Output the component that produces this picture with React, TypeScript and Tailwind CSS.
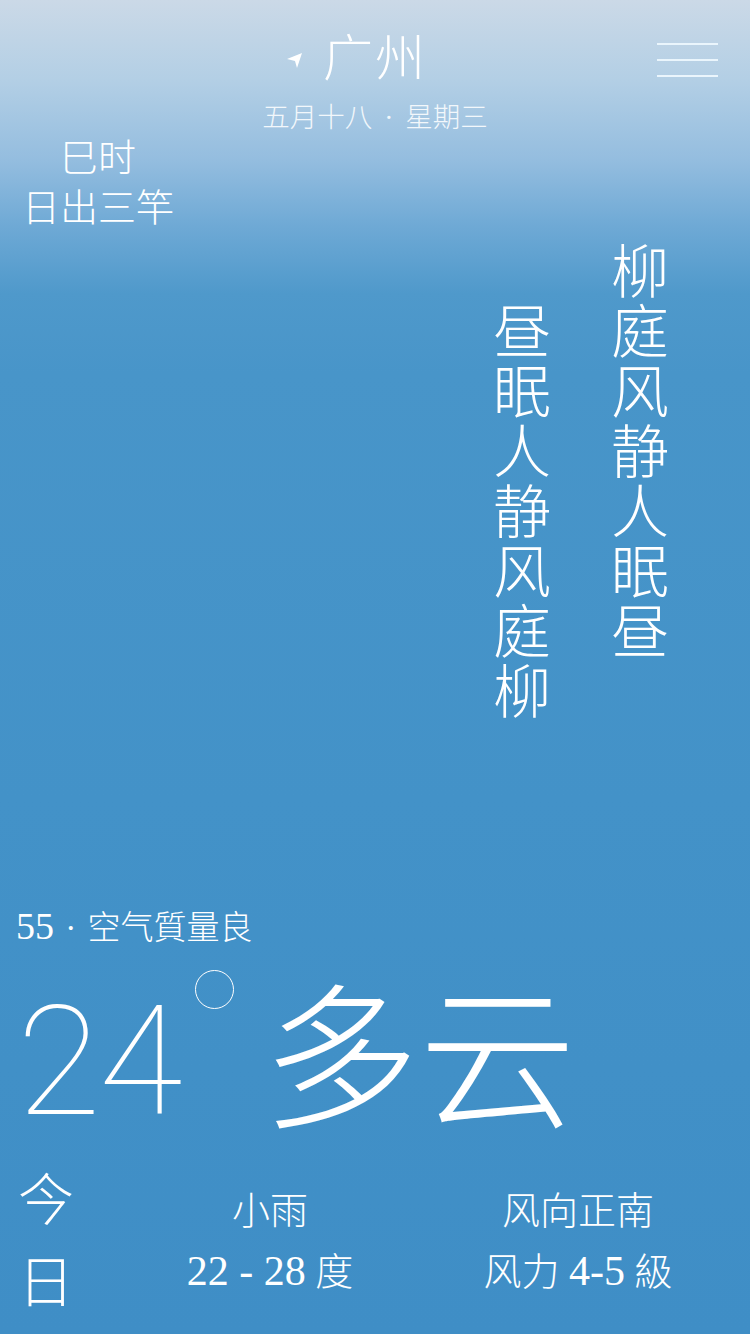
import React from 'react';

const cjk = "font-['Liberation_Serif','Noto_Sans_CJK_SC',serif]";

const VerticalLine = ({ text, className }: { text: string; className?: string }) => (
    <div className={`flex flex-col ${className ?? ''}`}>
        {Array.from(text).map((ch, i) => (
            <span key={i} className="block h-[60px] text-[58px] leading-[60px] font-light">
                {ch}
            </span>
        ))}
    </div>
);

const LocationArrow = () => (
    <svg width="16" height="16" viewBox="0 0 16 16" className="mt-[2px]">
        <polygon points="0,7 15,1 10,16 8,9" fill="#ffffff" />
    </svg>
);

export default function App() {
    return (
        <div
            className={`w-[750px] h-[1334px] flex flex-col text-white overflow-hidden ${cjk} bg-[linear-gradient(180deg,#cbd9e7_0%,#b3cfe5_6%,#94bddf_12%,#6ea9d5_17%,#4f99cb_22%,#4895c9_28%,#4392c8_60%,#3f8ec6_100%)]`}
        >
            {/* header */}
            <header className="relative pt-[31px] flex flex-col items-center">
                <div className="flex items-center gap-[20px] pr-[36px]">
                    <LocationArrow />
                    <span className="text-[50px] leading-[56px] font-light tracking-[2px]">广州</span>
                </div>
                <div className="mt-[16px] text-[27.5px] leading-[30px] font-light text-[#f2f7fb]">
                    五月十八<span className="mx-[5px]"> · </span>星期三
                </div>
                <button className="absolute right-[32px] top-[43px] flex flex-col gap-[14px]">
                    <span className="block w-[61px] h-[2px] bg-[#eaf5fc]" />
                    <span className="block w-[61px] h-[2px] bg-[#eaf5fc]" />
                    <span className="block w-[61px] h-[2px] bg-[#eaf5fc]" />
                </button>
            </header>

            {/* hour */}
            <div className="mt-0 ml-[22px] w-fit flex flex-col items-center text-[38px] leading-[50px] font-light">
                <span>巳时</span>
                <span>日出三竿</span>
            </div>

            {/* poem */}
            <div className="mt-[11px] flex justify-end gap-[60px] pr-[81px]">
                <VerticalLine text="昼眠人静风庭柳" className="mt-[60px]" />
                <VerticalLine text="柳庭风静人眠昼" />
            </div>

            <div className="flex-1" />

            {/* air quality */}
            <div className="pl-[16px] text-[33px] leading-[40px] font-light">
                <span className="text-[38px]">55</span>
                <span className="mx-[3px]"> · </span>
                <span>空气質量良</span>
            </div>

            {/* temperature + condition */}
            <div className="mt-[20px] flex items-start pl-[17px]">
                <span className="block w-[178px] mt-[17px] font-['Roboto','Lato',sans-serif] font-thin text-[153px] leading-[153px] tracking-[-2px]">
                    24
                </span>
                <span className="mt-[2px] block w-[39px] h-[39px] rounded-full border-[1.5px] border-white" />
                <span className="ml-[28px] mt-[15px] text-[157px] leading-[160px] font-light">多云</span>
            </div>

            {/* today */}
            <div className="mt-[28px] mb-[21px] flex">
                <div className="w-[120px] pl-[18px] flex flex-col text-[56px] leading-[60px] font-light gap-[22px]">
                    <span>今</span>
                    <span>日</span>
                </div>
                <div className="w-[300px] flex flex-col items-center pt-[10px] text-[38px] leading-[60px] font-light">
                    <span>小雨</span>
                    <span>
                        <span className="text-[42px]">22 - 28</span> 度
                    </span>
                </div>
                <div className="w-[316px] flex flex-col items-center pt-[10px] text-[38px] leading-[60px] font-light">
                    <span>风向正南</span>
                    <span>
                        风力 <span className="text-[42px]">4-5</span> 級
                    </span>
                </div>
            </div>
        </div>
    );
}
